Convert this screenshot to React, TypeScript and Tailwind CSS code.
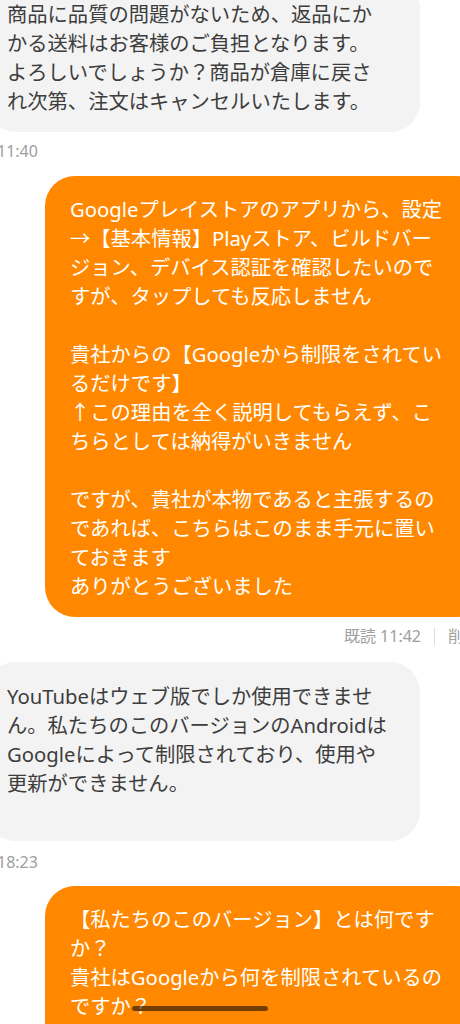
const grayOne = `商品に品質の問題がないため、返品にか
かる送料はお客様のご負担となります。
よろしいでしょうか？商品が倉庫に戻さ
れ次第、注文はキャンセルいたします。`;

const orangeOne = `Googleプレイストアのアプリから、設定
→【基本情報】Playストア、ビルドバー
ジョン、デバイス認証を確認したいので
すが、タップしても反応しません
 
貴社からの【Googleから制限をされてい
るだけです】
↑この理由を全く説明してもらえず、こ
ちらとしては納得がいきません
 
ですが、貴社が本物であると主張するの
であれば、こちらはこのまま手元に置い
ておきます
ありがとうございました`;

const grayTwo = `YouTubeはウェブ版でしか使用できませ
ん。私たちのこのバージョンのAndroidは
Googleによって制限されており、使用や
更新ができません。
 `;

const orangeTwo = `【私たちのこのバージョン】とは何です
か？
貴社はGoogleから何を制限されているの
ですか？
 `;

const Incoming = ({ text, className = "" }: { text: string; className?: string }) => (
  <div
    className={`w-[434px] self-start whitespace-pre rounded-[30px] bg-[#f3f3f3] pl-[21px] pr-4 text-[20.3px] leading-[29px] text-[#3d3d3d] ${className}`}
  >
    {text}
  </div>
);

const Outgoing = ({ text, className = "" }: { text: string; className?: string }) => (
  <div
    className={`w-[441px] self-end whitespace-pre rounded-[30px] bg-[#ff8800] pl-[25px] pr-4 text-[20.3px] leading-[29px] text-white ${className}`}
  >
    {text}
  </div>
);

export default function App() {
  return (
    <div className="relative h-[1024px] w-[460px] overflow-hidden bg-white font-['Noto_Sans','Noto_Sans_CJK_JP',sans-serif]">
      <div className="-ml-[14px] -mt-[20px] flex w-[500px] flex-col">
        <Incoming text={grayOne} className="pb-[16px] pt-[20px]" />
        <div className="ml-[11px] mt-[8px] text-[16px] leading-[22px] text-[#9e9e9e]">11:40</div>

        <Outgoing text={orangeOne} className="mt-[14px] pb-[16px] pt-[19px]" />
        <div className="mr-[6px] mt-[8px] flex items-center self-end text-[16px] leading-[22px] text-[#9e9e9e]">
          <span>既読 11:42</span>
          <span className="mx-[13px] h-[17px] w-px bg-[#dcdcdc]" />
          <span>削除</span>
        </div>

        <Incoming text={grayTwo} className="mt-[15px] pb-[14px] pt-[20px]" />
        <div className="ml-[11px] mt-[10px] text-[16px] leading-[22px] text-[#9e9e9e]">18:23</div>

        <Outgoing text={orangeTwo} className="mt-[13px] pb-[16px] pt-[19px]" />
      </div>

      <div className="absolute left-[132px] top-[1006px] h-[5px] w-[136px] rounded-full bg-black/55" />
    </div>
  );
}
